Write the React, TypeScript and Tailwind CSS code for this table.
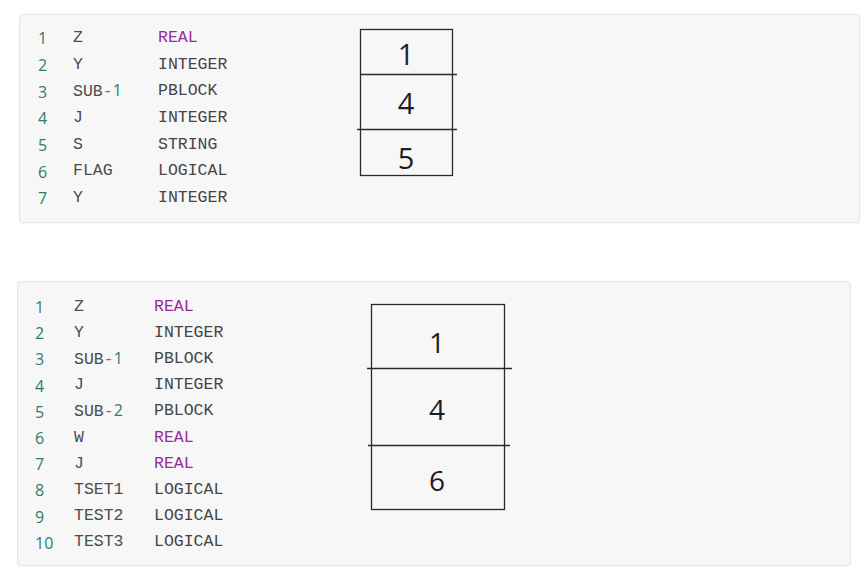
import React from "react";

type Seg = { t: string; c: "id" | "num" | "op" };
type Row = { name: Seg[]; type: string; purple?: boolean };

const mono = { fontFamily: '"Liberation Mono", "DejaVu Sans Mono", monospace' };

const rows1: Row[] = [
  { name: [{ t: "Z", c: "id" }], type: "REAL", purple: true },
  { name: [{ t: "Y", c: "id" }], type: "INTEGER" },
  { name: [{ t: "SUB", c: "id" }, { t: "-", c: "op" }, { t: "1", c: "num" }], type: "PBLOCK" },
  { name: [{ t: "J", c: "id" }], type: "INTEGER" },
  { name: [{ t: "S", c: "id" }], type: "STRING" },
  { name: [{ t: "FLAG", c: "id" }], type: "LOGICAL" },
  { name: [{ t: "Y", c: "id" }], type: "INTEGER" },
];

const rows2: Row[] = [
  { name: [{ t: "Z", c: "id" }], type: "REAL", purple: true },
  { name: [{ t: "Y", c: "id" }], type: "INTEGER" },
  { name: [{ t: "SUB", c: "id" }, { t: "-", c: "op" }, { t: "1", c: "num" }], type: "PBLOCK" },
  { name: [{ t: "J", c: "id" }], type: "INTEGER" },
  { name: [{ t: "SUB", c: "id" }, { t: "-", c: "op" }, { t: "2", c: "num" }], type: "PBLOCK" },
  { name: [{ t: "W", c: "id" }], type: "REAL", purple: true },
  { name: [{ t: "J", c: "id" }], type: "REAL", purple: true },
  { name: [{ t: "TSET1", c: "id" }], type: "LOGICAL" },
  { name: [{ t: "TEST2", c: "id" }], type: "LOGICAL" },
  { name: [{ t: "TEST3", c: "id" }], type: "LOGICAL" },
];

function Seg({ s }: { s: Seg }) {
  if (s.c === "num")
    return (
      <span className="text-[#2f7c67] text-[16px] [font-family:'Open_Sans',sans-serif]">{s.t}</span>
    );
  if (s.c === "op") return <span className="text-[#d2453a]">{s.t}</span>;
  return <span>{s.t}</span>;
}

function Code({ rows, lh, nameW, numW }: { rows: Row[]; lh: string; nameW: string; numW: string }) {
  return (
    <div className="flex flex-col">
      {rows.map((r, i) => (
        <div key={i} className={`flex items-center ${lh}`}>
          <span className={`${numW} text-[#2f7c67] text-[16px] [font-family:'Open_Sans',sans-serif]`}>
            {i + 1}
          </span>
          <span className={`${nameW} text-[#4d4d4d] text-[16.5px]`} style={mono}>
            {r.name.map((s, j) => (
              <Seg key={j} s={s} />
            ))}
          </span>
          <span
            className={`text-[16.5px] ${r.purple ? "text-[#972b9c]" : "text-[#454545]"}`}
            style={mono}
          >
            {r.type}
          </span>
        </div>
      ))}
    </div>
  );
}

export default function App() {
  return (
    <div className="min-h-[577px] w-[863px] bg-white flex flex-col">
      {/* Panel 1 */}
      <div className="ml-[19px] mt-[14px] w-[841px] h-[209px] rounded-[4px] border border-[#e6e6e6] bg-[#f7f7f7] shadow-[0_1px_2px_rgba(0,0,0,0.04)] flex items-start pl-[18px] pt-[10px]">
        <div className="w-[322px]">
          <Code rows={rows1} lh="h-[26.7px]" numW="w-[35px]" nameW="w-[85px]" />
        </div>
        <svg width="105" height="150" className="-ml-[5px] mt-[2px] shrink-0" viewBox="0 0 105 150">
          <rect x="5.5" y="2.5" width="92" height="146" fill="none" stroke="#2a2a2a" strokeWidth="1.3" />
          <line x1="5" y1="47.5" x2="102" y2="47.5" stroke="#2a2a2a" strokeWidth="1.3" />
          <line x1="2" y1="102.5" x2="102" y2="102.5" stroke="#2a2a2a" strokeWidth="1.3" />
          <g fontFamily="'Open Sans', 'Noto Sans', sans-serif" fontSize="29" fill="#1e1e1e" textAnchor="middle">
            <text x="51" y="38">1</text>
            <text x="51" y="87">4</text>
            <text x="51" y="142">5</text>
          </g>
        </svg>
      </div>

      {/* Panel 2 */}
      <div className="ml-[17px] mt-[58px] w-[834px] h-[285px] rounded-[4px] border border-[#e6e6e6] bg-[#f7f7f7] shadow-[0_1px_2px_rgba(0,0,0,0.04)] flex items-start pl-[17px] pt-[12px]">
        <div className="w-[331px]">
          <Code rows={rows2} lh="h-[26.2px]" numW="w-[39px]" nameW="w-[80px]" />
        </div>
        <svg width="150" height="212" className="-ml-[1px] mt-[7px] shrink-0" viewBox="0 0 150 212">
          <rect x="6.5" y="3.5" width="133" height="205" fill="none" stroke="#2a2a2a" strokeWidth="1.3" />
          <line x1="2" y1="67.5" x2="147" y2="67.5" stroke="#2a2a2a" strokeWidth="1.3" />
          <line x1="3" y1="144.5" x2="145" y2="144.5" stroke="#2a2a2a" strokeWidth="1.3" />
          <g fontFamily="'Open Sans', 'Noto Sans', sans-serif" fontSize="28" fill="#1e1e1e" textAnchor="middle">
            <text x="72" y="52">1</text>
            <text x="72" y="119">4</text>
            <text x="72" y="190">6</text>
          </g>
        </svg>
      </div>
    </div>
  );
}
